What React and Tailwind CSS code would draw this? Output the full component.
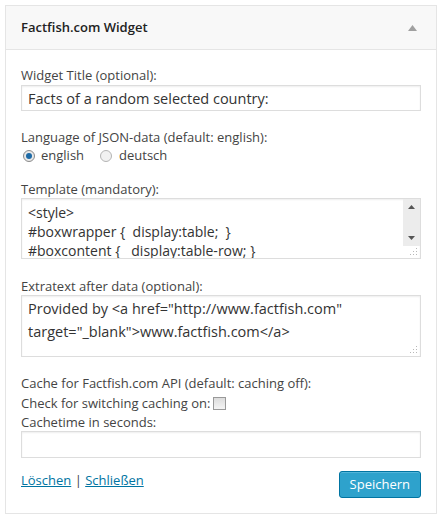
import { useState } from "react";

function Radio({ checked }) {
  return (
    <span
      className={`inline-flex h-[12px] w-[12px] items-center justify-center rounded-full border ${
        checked ? "border-[#8a8a8a] bg-[#e8e8e8]" : "border-[#b4b4b4] bg-[#f1f1f1]"
      }`}
    >
      {checked && <span className="h-[6px] w-[6px] rounded-full bg-[#1e6aa6]" />}
    </span>
  );
}

function ResizeGrip() {
  return (
    <svg width="8" height="8" viewBox="0 0 8 8" className="absolute bottom-[2px] right-[2px]">
      <rect x="6" y="0" width="1" height="1" fill="#b8b8b8" />
      <rect x="3" y="3" width="1" height="1" fill="#b8b8b8" />
      <rect x="6" y="3" width="1" height="1" fill="#b8b8b8" />
      <rect x="0" y="6" width="1" height="1" fill="#b8b8b8" />
      <rect x="3" y="6" width="1" height="1" fill="#b8b8b8" />
      <rect x="6" y="6" width="1" height="1" fill="#b8b8b8" />
    </svg>
  );
}

export default function App() {
  const [title, setTitle] = useState("Facts of a random selected country:");
  const [lang, setLang] = useState("english");
  const [cacheOn, setCacheOn] = useState(false);

  return (
    <div className="min-h-screen bg-white pl-[5px] pt-[5px] font-['Open_Sans',sans-serif] text-[13px] text-[#444]">
      <div className="w-[432px] border border-[#e5e5e5] bg-white">
        {/* widget header */}
        <div className="flex h-[44px] items-center justify-between border-b border-[#e5e5e5] bg-[#f8f8f8] pl-[15px] pr-[19px]">
          <span className="text-[13px] font-semibold text-[#222]">Factfish.com Widget</span>
          <svg width="9" height="6" viewBox="0 0 9 6">
            <path d="M4.5 0 L9 6 L0 6 Z" fill="#a0a0a0" />
          </svg>
        </div>

        <div className="px-[15px] pt-[16px] pb-[15px]">
          <div className="leading-[18px]">Widget Title (optional):</div>
          <input
            value={title}
            onChange={(e) => setTitle(e.target.value)}
            className="mt-px block h-[26px] w-full border border-[#ddd] px-[6px] text-[14.5px] text-[#333] outline-none shadow-[inset_0_1px_2px_rgba(0,0,0,0.07)]"
          />

          <div className="mt-[17px] leading-[18px]">Language of JSON-data (default: english):</div>
          <div className="mt-px flex h-[18px] items-center pl-[2px]">
            <label className="flex items-center gap-[6px]" onClick={() => setLang("english")}>
              <Radio checked={lang === "english"} />
              <span>english</span>
            </label>
            <label className="ml-[16px] flex items-center gap-[7px]" onClick={() => setLang("deutsch")}>
              <Radio checked={lang === "deutsch"} />
              <span>deutsch</span>
            </label>
          </div>

          <div className="mt-[15px] leading-[18px]">Template (mandatory):</div>
          <div className="relative h-[61px] overflow-hidden border border-[#ddd] shadow-[inset_0_1px_2px_rgba(0,0,0,0.07)]">
            <div className="pl-[6px] pt-[4px] text-[14px] leading-[19px] text-[#333] whitespace-pre">
              <div>{"<style>"}</div>
              <div>{"#boxwrapper {  display:table;  }"}</div>
              <div>{"#boxcontent {   display:table-row; }"}</div>
            </div>
            {/* scrollbar */}
            <div className="absolute right-0 top-0 flex h-[47px] w-[17px] flex-col items-center justify-between bg-[#ececec] py-[6px]">
              <svg width="7" height="4" viewBox="0 0 7 4">
                <path d="M3.5 0 L7 4 L0 4 Z" fill="#555" />
              </svg>
              <svg width="7" height="4" viewBox="0 0 7 4">
                <path d="M0 0 L7 0 L3.5 4 Z" fill="#555" />
              </svg>
            </div>
            <ResizeGrip />
          </div>

          <div className="mt-[18px] leading-[18px]">Extratext after data (optional):</div>
          <div className="relative h-[62px] border border-[#ddd] shadow-[inset_0_1px_2px_rgba(0,0,0,0.07)]">
            <div className="pl-[6px] pt-[1px] text-[14.5px] leading-[23px] text-[#333]">
              Provided by &lt;a href="http://www.factfish.com"
              <br />
              target="_blank"&gt;www.factfish.com&lt;/a&gt;
            </div>
            <ResizeGrip />
          </div>

          <div className="mt-[17px] leading-[18px]">Cache for Factfish.com API (default: caching off):</div>
          <div className="mt-[2px] flex h-[18px] items-center leading-[18px]">
            <span>Check for switching caching on:</span>
            <span
              onClick={() => setCacheOn(!cacheOn)}
              className="ml-[3px] inline-block h-[13px] w-[13px] border border-[#999] bg-gradient-to-b from-[#dcdcdc] to-[#f4f4f4]"
            />
          </div>
          <div className="mt-px leading-[18px]">Cachetime in seconds:</div>
          <input className="block h-[27px] w-full border border-[#ddd] px-[6px] text-[14.5px] outline-none shadow-[inset_0_1px_2px_rgba(0,0,0,0.07)]" />

          <div className="mt-[13px] flex items-start justify-between">
            <div className="leading-[18px]">
              <a href="#" className="text-[#0074a2] underline">Löschen</a>
              <span className="text-[#444]"> | </span>
              <a href="#" className="text-[#0074a2] underline">Schließen</a>
            </div>
            <button className="h-[27px] rounded-[3px] border border-[#0074a2] bg-[#2ea2cc] px-[10px] text-[13px] text-white shadow-[inset_0_1px_0_rgba(120,200,230,0.5)]">
              Speichern
            </button>
          </div>
        </div>
      </div>
    </div>
  );
}
